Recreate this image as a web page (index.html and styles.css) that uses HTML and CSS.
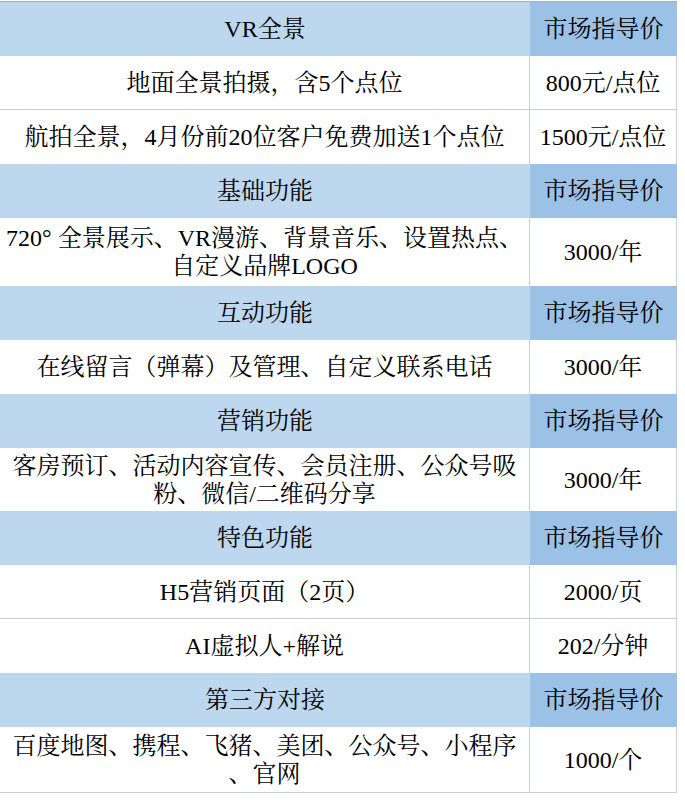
FILE: index.html
```html
<!DOCTYPE html>
<html lang="zh-CN">
<head>
<meta charset="utf-8">
<title>VR全景 价格表</title>
<link rel="stylesheet" href="styles.css">
</head>
<body>
<div class="sheet">
  <div class="row head">
    <div class="cell item">VR全景</div>
    <div class="cell price">市场指导价</div>
  </div>
  <div class="row body lined">
    <div class="cell item">地面全景拍摄，含5个点位</div>
    <div class="cell price">800元/点位</div>
  </div>
  <div class="row body">
    <div class="cell item">航拍全景，4月份前20位客户免费加送1个点位</div>
    <div class="cell price">1500元/点位</div>
  </div>
  <div class="row head">
    <div class="cell item">基础功能</div>
    <div class="cell price">市场指导价</div>
  </div>
  <div class="row body tall">
    <div class="cell item">720°&nbsp;全景展示、VR漫游、背景音乐、设置热点、<br>自定义品牌LOGO</div>
    <div class="cell price">3000/年</div>
  </div>
  <div class="row head">
    <div class="cell item">互动功能</div>
    <div class="cell price">市场指导价</div>
  </div>
  <div class="row body">
    <div class="cell item">在线留言（弹幕）及管理、自定义联系电话</div>
    <div class="cell price">3000/年</div>
  </div>
  <div class="row head">
    <div class="cell item">营销功能</div>
    <div class="cell price">市场指导价</div>
  </div>
  <div class="row body short">
    <div class="cell item">客房预订、活动内容宣传、会员注册、公众号吸<br>粉、微信/二维码分享</div>
    <div class="cell price">3000/年</div>
  </div>
  <div class="row head">
    <div class="cell item">特色功能</div>
    <div class="cell price">市场指导价</div>
  </div>
  <div class="row body lined">
    <div class="cell item">H5营销页面（2页）</div>
    <div class="cell price">2000/页</div>
  </div>
  <div class="row body">
    <div class="cell item">AI虚拟人+解说</div>
    <div class="cell price">202/分钟</div>
  </div>
  <div class="row head">
    <div class="cell item">第三方对接</div>
    <div class="cell price">市场指导价</div>
  </div>
  <div class="row body two lined">
    <div class="cell item">百度地图、携程、飞猪、美团、公众号、小程序<br>、官网</div>
    <div class="cell price">1000/个</div>
  </div>
</div>
</body>
</html>
```

FILE: styles.css
```css
html, body {
  margin: 0;
  padding: 0;
  background: #ffffff;
}

body {
  font-family: "Liberation Serif", "Noto Serif CJK SC", "Noto Sans CJK SC", serif;
  font-size: 24px;
  color: #000000;
}

.sheet {
  width: 677px;
  margin-top: 1px;
  border-top: 1px solid #a9adb5;
}

.row {
  display: flex;
  height: 54px;
  box-sizing: border-box;
}

.row.two {
  height: 66px;
}

.row.tall {
  height: 68px;
}

.row.short {
  height: 63px;
}

.row.lined {
  border-bottom: 1px solid #c8ccd8;
}

.cell {
  display: flex;
  align-items: center;
  justify-content: center;
  text-align: center;
  white-space: nowrap;
  line-height: 28px;
  box-sizing: border-box;
}

.item {
  width: 530px;
}

.price {
  width: 147px;
}

.head .item {
  background: #bdd7ee;
}

.head .price {
  background: #9bc2e6;
}

.body .item,
.body .price {
  border-right: 1px solid #c8ccd8;
}
```
